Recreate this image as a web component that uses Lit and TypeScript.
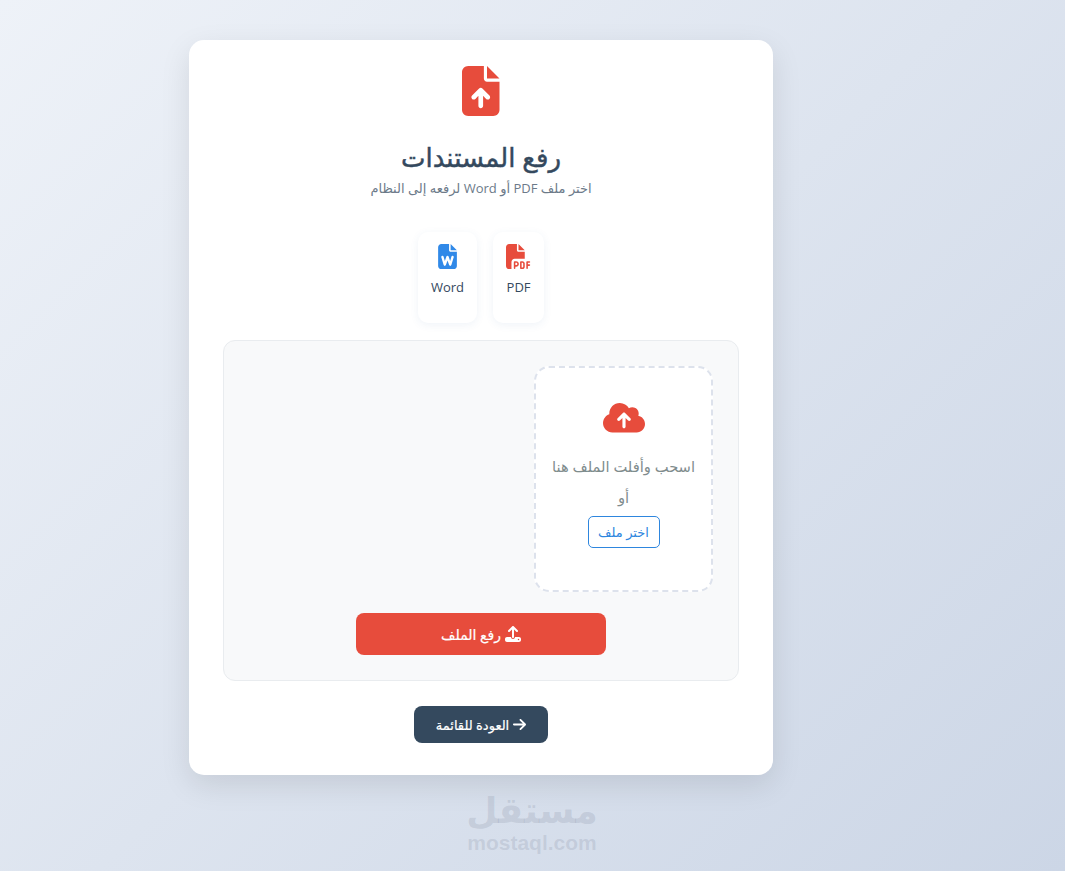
import { LitElement, html, css } from "lit";
import { customElement } from "lit/decorators.js";

@customElement("app-root")
export class AppRoot extends LitElement {
  static styles = css`
    :host {
      display: block;
      position: relative;
      min-height: 871px;
      overflow: hidden;
      background: linear-gradient(135deg, #eef2f8 0%, #ccd6e6 100%);
      font-family: "Open Sans", "DejaVu Sans", sans-serif;
      color: #2c3e50;
      box-sizing: border-box;
      padding: 40px 292px 40px 189px;
    }
    * { box-sizing: border-box; }
    .card {
      height: 735px;
      background: #fff;
      border-radius: 15px;
      box-shadow: 0 10px 30px rgba(0, 0, 0, 0.1);
      padding: 26px 34px 0;
      display: flex;
      flex-direction: column;
      align-items: center;
    }
    svg { display: block; fill: currentColor; }
    .hero { height: 50px; color: #e74c3c; }
    h1 {
      margin: 23px 0 0;
      height: 36px;
      line-height: 36px;
      font-size: 26px;
      font-weight: 400;
      -webkit-text-stroke: 0.45px currentColor;
      color: #34495e;
    }
    .sub {
      margin: 3px 0 0;
      height: 20px;
      line-height: 20px;
      font-size: 13px;
      color: #6c7a89;
    }
    .formats { display: flex; gap: 16px; margin-top: 34px; height: 91px; }
    .format {
      background: #fff;
      border-radius: 10px;
      box-shadow: 0 2px 8px rgba(52, 100, 160, 0.08);
      padding: 12px 13px 0;
      display: flex;
      flex-direction: column;
      align-items: center;
      font-size: 13px;
      color: #34495e;
    }
    .format span { margin-top: 8px; line-height: 20px; }
    .word { color: #3089e8; }
    .pdf { color: #e74c3c; }
    .panel {
      align-self: stretch;
      margin-top: 17px;
      height: 341px;
      background: #f8f9fa;
      border: 1px solid #e9ecef;
      border-radius: 12px;
      padding: 25px;
      display: flex;
      flex-direction: column;
      align-items: stretch;
    }
    .zone {
      width: 179px;
      height: 226px;
      border: 2px dashed #dde2ec;
      border-radius: 15px;
      background: #fff;
      display: flex;
      flex-direction: column;
      align-items: center;
      padding-top: 33px;
      font-size: 14.7px;
      color: #7f8c8d;
    }
    .zone svg { color: #e74c3c; }
    .zone p { margin: 0; line-height: 31px; white-space: nowrap; }
    .zone .drag { margin-top: 16px; }
    .pick {
      margin-top: 3px;
      width: 72px;
      height: 32px;
      border: 1px solid #2e86de;
      border-radius: 5px;
      background: #fff;
      color: #2e86de;
      font: inherit;
      font-size: 13px;
      padding: 0;
    }
    .send {
      align-self: center;
      margin-top: 21px;
      width: 250px;
      height: 42px;
      border: none;
      border-radius: 8px;
      background: #e74c3c;
      color: #fff;
      font: inherit;
      font-size: 14px;
      -webkit-text-stroke: 0.2px currentColor;
      display: flex;
      align-items: center;
      justify-content: center;
      gap: 4px;
      padding: 0;
    }
    .back {
      margin-top: 25px;
      width: 134px;
      height: 37px;
      border: none;
      border-radius: 8px;
      background: #34495e;
      color: #fff;
      font: inherit;
      font-size: 13px;
      -webkit-text-stroke: 0.2px currentColor;
      display: flex;
      align-items: center;
      justify-content: center;
      gap: 4px;
      padding: 0;
    }
    .mark {
      position: absolute;
      left: 447px;
      top: 790px;
      width: 170px;
      text-align: center;
      color: rgba(120, 130, 150, 0.2);
      font-family: "DejaVu Sans", sans-serif;
      font-weight: 700;
      pointer-events: none;
    }
    .mark .ar { font-size: 36px; line-height: 42px; height: 42px; }
    .mark .en { font-family: "Liberation Sans", sans-serif; font-size: 21px; line-height: 22px; }
  `;

  render() {
    return html`
      <div class="card" dir="rtl" lang="ar">
        <svg class="hero" width="37.5" height="50" viewBox="0 0 384 512"><path d="M64 0C28.7 0 0 28.7 0 64V448c0 35.3 28.7 64 64 64H320c35.3 0 64-28.7 64-64V160H256c-17.7 0-32-14.3-32-32V0H64zM256 0V128H384L256 0zM216 408c0 13.3-10.7 24-24 24s-24-10.7-24-24V305.9l-31 31c-9.4 9.4-24.6 9.4-33.9 0s-9.4-24.6 0-33.9l72-72c9.4-9.4 24.6-9.4 33.9 0l72 72c9.4 9.4 9.4 24.6 0 33.9s-24.6 9.4-33.9 0l-31-31V408z"/></svg>
        <h1>رفع المستندات</h1>
        <p class="sub">اختر ملف PDF أو Word لرفعه إلى النظام</p>
        <div class="formats">
          <div class="format">
            <svg class="pdf" width="25" height="25" viewBox="0 0 512 512"><path d="M0 64C0 28.7 28.7 0 64 0H224V128c0 17.7 14.3 32 32 32H384V304H176c-35.3 0-64 28.7-64 64V512H64c-35.3 0-64-28.7-64-64V64zm384 64H256V0L384 128zM176 352h32c30.9 0 56 25.1 56 56s-25.1 56-56 56H192v32c0 8.8-7.2 16-16 16s-16-7.2-16-16V448 368c0-8.8 7.2-16 16-16zm32 80c13.3 0 24-10.7 24-24s-10.7-24-24-24H192v48h16zm96-80h32c26.5 0 48 21.5 48 48v64c0 26.5-21.5 48-48 48H304c-8.8 0-16-7.2-16-16V368c0-8.8 7.2-16 16-16zm32 128c8.8 0 16-7.2 16-16V400c0-8.8-7.2-16-16-16H320v96h16zm80-112c0-8.8 7.2-16 16-16h48c8.8 0 16 7.2 16 16s-7.2 16-16 16H448v32h32c8.8 0 16 7.2 16 16s-7.2 16-16 16H448v48c0 8.8-7.2 16-16 16s-16-7.2-16-16V432 368z"/></svg>
            <span>PDF</span>
          </div>
          <div class="format">
            <svg class="word" width="19" height="25" viewBox="0 0 384 512"><path d="M64 0C28.7 0 0 28.7 0 64V448c0 35.3 28.7 64 64 64H320c35.3 0 64-28.7 64-64V160H256c-17.7 0-32-14.3-32-32V0H64zM256 0V128H384L256 0zM111 257.1l26.8 89.2 31.6-90.3c3.4-9.6 12.5-16.1 22.7-16.1s19.3 6.4 22.7 16.1l31.6 90.3L273 257.1c3.8-12.7 17.2-19.9 29.9-16.1s19.9 17.2 16.1 29.9l-48 160c-3 10-12 16.9-22.4 17.1s-19.8-6.2-23.2-16.1L192 336.6l-33.3 95.3c-3.4 9.8-12.8 16.3-23.2 16.1s-19.5-7.1-22.4-17.1l-48-160c-3.8-12.7 3.4-26.1 16.1-29.9s26.1 3.4 29.9 16.1z"/></svg>
            <span>Word</span>
          </div>
        </div>
        <div class="panel">
          <div class="zone">
            <svg width="42" height="33.6" viewBox="0 0 640 512"><path d="M144 480C64.5 480 0 415.5 0 336c0-62.8 40.2-116.2 96.2-135.9c-.1-2.7-.2-5.4-.2-8.1c0-88.4 71.6-160 160-160c59.3 0 111 32.2 138.7 80.2C409.9 102 428.3 96 448 96c53 0 96 43 96 96c0 12.2-2.3 23.8-6.4 34.6C596 238.4 640 290.1 640 352c0 70.7-57.3 128-128 128H144zm79-217c-9.4 9.4-9.4 24.6 0 33.9s24.6 9.4 33.9 0l39-39V392c0 13.3 10.7 24 24 24s24-10.7 24-24V257.9l39 39c9.4 9.4 24.6 9.4 33.9 0s9.4-24.6 0-33.9l-80-80c-9.4-9.4-24.6-9.4-33.9 0l-80 80z"/></svg>
            <p class="drag">اسحب وأفلت الملف هنا</p>
            <p>أو</p>
            <button class="pick">اختر ملف</button>
          </div>
          <button class="send">
            <svg width="16" height="16" viewBox="0 0 512 512"><path d="M288 109.3V352c0 17.7-14.3 32-32 32s-32-14.3-32-32V109.3l-73.4 73.4c-12.5 12.5-32.8 12.5-45.3 0s-12.5-32.8 0-45.3l128-128c12.5-12.5 32.8-12.5 45.3 0l128 128c12.5 12.5 12.5 32.8 0 45.3s-32.8 12.5-45.3 0L288 109.3zM64 352H192c0 35.3 28.7 64 64 64s64-28.7 64-64H448c35.3 0 64 28.7 64 64v32c0 35.3-28.7 64-64 64H64c-35.3 0-64-28.7-64-64V416c0-35.3 28.7-64 64-64zM432 456a24 24 0 1 0 0-48 24 24 0 1 0 0 48z"/></svg>
            <span>رفع الملف</span>
          </button>
        </div>
        <button class="back">
          <svg width="13" height="15" viewBox="0 0 448 512"><path d="M438.6 278.6c12.5-12.5 12.5-32.8 0-45.3l-160-160c-12.5-12.5-32.8-12.5-45.3 0s-12.5 32.8 0 45.3L338.8 224 32 224c-17.7 0-32 14.3-32 32s14.3 32 32 32l306.7 0L233.4 393.4c-12.5 12.5-12.5 32.8 0 45.3s32.8 12.5 45.3 0l160-160z"/></svg>
          <span>العودة للقائمة</span>
        </button>
      </div>
      <div class="mark">
        <div class="ar" lang="ar">مستقل</div>
        <div class="en">mostaql.com</div>
      </div>
    `;
  }
}
